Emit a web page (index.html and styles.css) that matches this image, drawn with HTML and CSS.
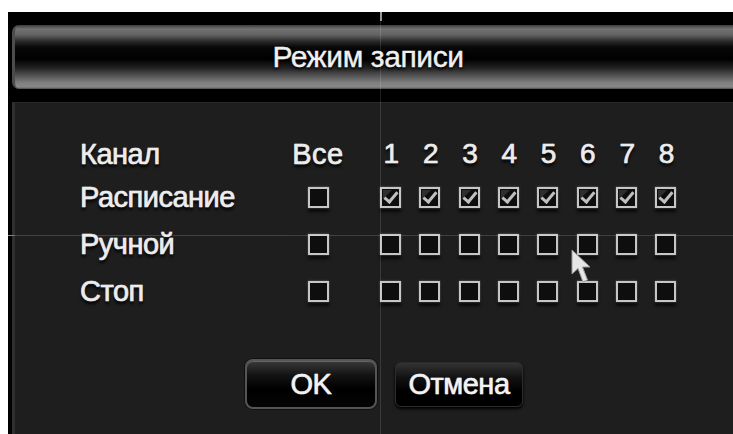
FILE: index.html
```html
<!DOCTYPE html>
<html lang="ru">
<head>
<meta charset="utf-8">
<title>Режим записи</title>
<link rel="stylesheet" href="styles.css">
</head>
<body>
<div class="screen">
  <div class="titlebar"><span class="title">Режим записи</span></div>
  <div class="panel">
    <div class="grid">
      <div class="label">Канал</div>
      <div class="all head">Все</div>
      <div class="num">1</div><div class="num">2</div><div class="num">3</div><div class="num">4</div>
      <div class="num">5</div><div class="num">6</div><div class="num">7</div><div class="num">8</div>

      <div class="label">Расписание</div>
      <div class="all"><span class="box"></span></div>
      <div class="cell"><span class="box on"></span></div><div class="cell"><span class="box on"></span></div>
      <div class="cell"><span class="box on"></span></div><div class="cell"><span class="box on"></span></div>
      <div class="cell"><span class="box on"></span></div><div class="cell"><span class="box on"></span></div>
      <div class="cell"><span class="box on"></span></div><div class="cell"><span class="box on"></span></div>

      <div class="label">Ручной</div>
      <div class="all"><span class="box"></span></div>
      <div class="cell"><span class="box"></span></div><div class="cell"><span class="box"></span></div>
      <div class="cell"><span class="box"></span></div><div class="cell"><span class="box"></span></div>
      <div class="cell"><span class="box"></span></div><div class="cell"><span class="box"></span></div>
      <div class="cell"><span class="box"></span></div><div class="cell"><span class="box"></span></div>

      <div class="label">Стоп</div>
      <div class="all"><span class="box"></span></div>
      <div class="cell"><span class="box"></span></div><div class="cell"><span class="box"></span></div>
      <div class="cell"><span class="box"></span></div><div class="cell"><span class="box"></span></div>
      <div class="cell"><span class="box"></span></div><div class="cell"><span class="box"></span></div>
      <div class="cell"><span class="box"></span></div><div class="cell"><span class="box"></span></div>
    </div>
    <div class="buttons">
      <button class="btn ok">OK</button>
      <button class="btn cancel">Отмена</button>
    </div>
  </div>

  <!-- crosshair guides and pointer drawn over the dialog -->
  <div class="guide-v"></div>
  <div class="guide-tick"></div>
  <div class="guide-h"></div>
  <svg class="pointer" width="24" height="36" viewBox="0 0 24 36">
    <path d="M2 1 L2 25 L8 19.5 L13 33 L17.5 31 L12.5 18 L20 18 Z" fill="#e6e6e6" stroke="#9a9a9a" stroke-width="1"/>
  </svg>
</div>
</body>
</html>
```

FILE: styles.css
```css
html, body {
  margin: 0;
  padding: 0;
}

body {
  width: 733px;
  height: 434px;
  overflow: hidden;
  background: #fff;
  font-family: "Liberation Sans", Arial, sans-serif;
  color: #ececec;
}

.screen {
  position: relative;
  box-sizing: border-box;
  margin: 12px 0 0 8px;
  height: 422px;
  padding: 13px 0 0 4px;
  background: #000;
  display: flex;
  flex-direction: column;
}

/* glossy header strip */
.titlebar {
  height: 64px;
  border-left: 3px solid #4c4c4c;
  border-radius: 7px 0 0 7px;
  background: linear-gradient(to bottom,
    #3c3c3c 0px,
    #727272 4px,
    #626262 10px,
    #2c2c2c 16px,
    #080808 22px,
    #000 34px,
    #222 43px,
    #565656 51px,
    #808080 58px,
    #888 62px,
    #4a4a4a 64px);
  display: flex;
  align-items: center;
  justify-content: center;
  padding-right: 12px;
}

.title {
  font-size: 30px;
  color: #f0f0f0;
  -webkit-text-stroke: 0.4px #f0f0f0;
  text-shadow: 0 0 2px rgba(0,0,0,.9), 0 2px 3px #000;
  letter-spacing: -0.4px;
}

.panel {
  flex: 1;
  margin-top: 13px;
  border-top: 1px solid #2a2a2a;
  border-left: 3px solid #2f2f2f;
  background: #1e1e1e;
  padding: 31px 0 0 65px;
}

.grid {
  display: grid;
  grid-template-columns: 213px 78px repeat(8, 39.3px);
  grid-template-rows: 40px 47px 47px 47px;
  align-items: center;
}

.label,
.all.head,
.num {
  font-size: 29px;
  line-height: 1;
  letter-spacing: -0.5px;
  -webkit-text-stroke: 0.5px #ececec;
  text-shadow: 0 0 1px #bbb, 0 3px 3px #000;
}

.all {
  width: 50px;
  justify-self: start;
  display: flex;
  justify-content: center;
}

.all.head {
  width: 60px;
  margin-left: -5px;
  letter-spacing: 0.5px;
}

.num,
.cell {
  display: flex;
  justify-content: center;
}

.num {
  font-size: 28px;
  margin-left: 1px;
}

.box {
  position: relative;
  display: block;
  width: 17px;
  height: 17px;
  border: 2.5px solid #c6c6c6;
  background: #0e0e0e;
  box-shadow: 0 0 2px rgba(255,255,255,.35), 0 4px 3px rgba(0,0,0,.7);
}

.box.on::before {
  content: "";
  position: absolute;
  left: 1px;
  top: 1px;
  width: 0;
  height: 0;
  border-top: 9px solid #2e2e2e;
  border-right: 9px solid transparent;
}

.box.on::after {
  content: "";
  position: absolute;
  left: 5px;
  top: 0;
  width: 5px;
  height: 11px;
  border-right: 3px solid #c0c0c0;
  border-bottom: 3px solid #c0c0c0;
  transform: rotate(40deg);
}

.buttons {
  display: flex;
  align-items: center;
  gap: 18px;
  margin-top: 44px;
  padding-left: 165px;
}

.btn {
  font-family: "Liberation Sans", Arial, sans-serif;
  font-size: 29px;
  color: #f2f2f2;
  -webkit-text-stroke: 0.4px #f2f2f2;
  text-shadow: 0 0 1px #ccc;
  letter-spacing: -0.5px;
  padding: 0;
  cursor: default;
}

.ok {
  width: 132px;
  height: 50px;
  border: 2px solid #555;
  border-radius: 8px;
  background: linear-gradient(to bottom, #3a3a3a 0%, #141414 30%, #000 60%, #050505 100%);
  box-shadow: 0 0 0 1px #111, inset 0 1px 0 #666;
}

.cancel {
  width: 128px;
  height: 45px;
  border: 1px solid #2c2c2c;
  border-radius: 6px;
  background: linear-gradient(to bottom, #333 0%, #111 35%, #000 65%, #000 100%);
  box-shadow: 0 2px 3px #000;
}

.guide-v {
  position: absolute;
  left: 372px;
  top: 0;
  bottom: 0;
  width: 1px;
  background: rgba(255,255,255,.12);
}

.guide-tick {
  position: absolute;
  left: 372px;
  top: 0;
  width: 2px;
  height: 9px;
  background: #9a9a9a;
}

.guide-h {
  position: absolute;
  left: 0;
  right: 0;
  top: 223px;
  height: 1px;
  background: linear-gradient(to right, #8a8a8a 0, #8a8a8a 4px, rgba(255,255,255,.16) 8px, rgba(255,255,255,.14) 100%);
}

.pointer {
  position: absolute;
  left: 562px;
  top: 237px;
  filter: blur(0.6px);
}
```
